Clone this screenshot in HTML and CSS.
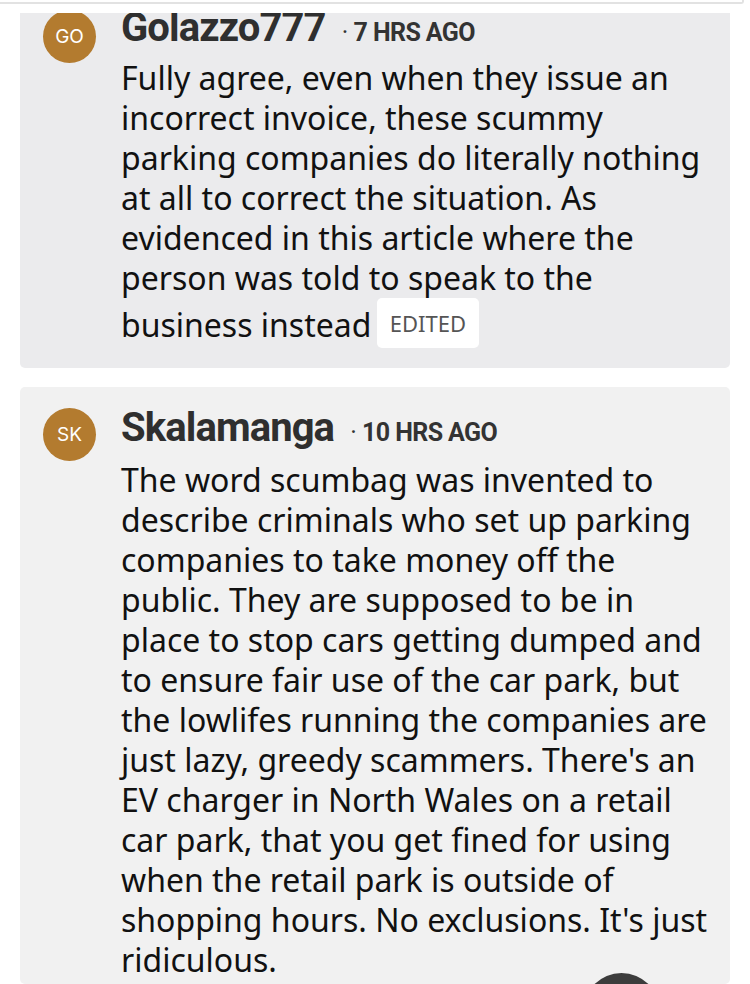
FILE: index.html
```html
<!DOCTYPE html>
<html lang="en">
<head>
<meta charset="utf-8">
<title>Comments</title>
<link rel="stylesheet" href="styles.css">
</head>
<body>
<div class="topbar"><div class="topbox"></div></div>
<div class="feed">
  <article class="card card-first">
    <div class="avatar">GO</div>
    <div class="content">
      <header class="meta">
        <span class="name">Golazzo777</span>
        <span class="time"><span class="dot">·</span>7 HRS AGO</span>
      </header>
      <p class="text">Fully agree, even when they issue an incorrect invoice, these scummy parking companies do literally nothing at all to correct the situation. As evidenced in this article where the person was told to speak to the business instead <span class="edited">EDITED</span></p>
    </div>
  </article>
  <article class="card card-second">
    <div class="avatar">SK</div>
    <div class="content">
      <header class="meta">
        <span class="name">Skalamanga</span>
        <span class="time"><span class="dot">·</span>10 HRS AGO</span>
      </header>
      <p class="text">The word scumbag was invented to describe criminals who set up parking companies to take money off the public. They are supposed to be in place to stop cars getting dumped and to ensure fair use of the car park, but the lowlifes running the companies are just lazy, greedy scammers. There's an EV charger in North Wales on a retail car park, that you get fined for using when the retail park is outside of shopping hours. No exclusions. It's just ridiculous.</p>
    </div>
    <div class="fab"></div>
  </article>
</div>
</body>
</html>
```

FILE: styles.css
```css
html, body {
  margin: 0;
  padding: 0;
  background: #ffffff;
}
body {
  width: 750px;
  height: 984px;
  overflow: hidden;
  font-family: "Noto Sans", "Open Sans", sans-serif;
  color: #111;
}
.topbar {
  height: 13px;
  background: #fff;
}
.topbox {
  width: 742px;
  height: 2px;
  border-right: 2px solid #e2e2e2;
  border-bottom: 2px solid #e2e2e2;
  border-bottom-right-radius: 3px;
}
.feed {
  display: flex;
  flex-direction: column;
  gap: 19px;
  padding: 0 20px;
  height: 971px;
  overflow: hidden;
}
.card {
  position: relative;
  display: flex;
  gap: 25px;
  padding: 21px 16px 0 23px;
  border-radius: 5px;
}
.card-first {
  background: #ebebed;
  margin-top: -26px;
  padding-bottom: 20px;
}
.card-first .meta {
  height: 50px;
}
.card-second {
  background: #f1f1f1;
  flex: 1;
}
.avatar {
  flex: 0 0 53px;
  width: 53px;
  height: 53px;
  border-radius: 50%;
  background: #b37b2f;
  color: #fff;
  display: flex;
  align-items: center;
  justify-content: center;
  font-family: "Inter", "Liberation Sans", sans-serif;
  font-size: 19px;
}
.card-first .avatar {
  margin-top: 2px;
}
.content {
  flex: 1;
  min-width: 0;
}
.meta {
  display: flex;
  align-items: baseline;
  height: 52px;
}
.name {
  font-family: "Roboto", "Liberation Sans", sans-serif;
  font-weight: 700;
  font-size: 40px;
  letter-spacing: -0.9px;
  color: #2f2f2f;
  line-height: 40px;
}
.time {
  font-family: "Roboto", "Liberation Sans", sans-serif;
  font-weight: 700;
  font-size: 25px;
  letter-spacing: -0.6px;
  color: #333;
  margin-left: 16px;
}
.dot {
  font-weight: 400;
  margin-right: 6px;
}
.text {
  margin: 0;
  font-size: 32px;
  line-height: 40px;
  color: #111;
}
.edited {
  display: inline-block;
  background: #fff;
  color: #555;
  font-size: 22px;
  line-height: 50px;
  padding: 0 13px;
  border-radius: 5px;
  vertical-align: 5px;
  margin-left: -3px;
}
.fab {
  position: absolute;
  left: 563px;
  top: 586px;
  width: 77px;
  height: 77px;
  border-radius: 50%;
  background: #3c3c3c;
}
```
